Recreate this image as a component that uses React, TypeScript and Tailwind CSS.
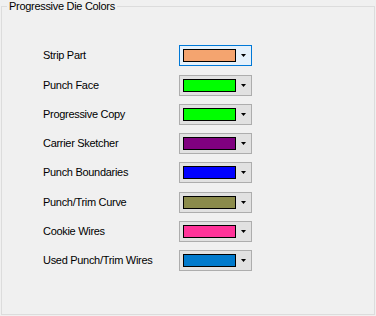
import React from "react";

type ColorRow = {
	label: string;
	color: string;
	extraTop?: boolean;
};

const rows: ColorRow[] = [
	{ label: "Strip Part", color: "#f4a46f" },
	{ label: "Punch Face", color: "#00ff00", extraTop: true },
	{ label: "Progressive Copy", color: "#00ff00" },
	{ label: "Carrier Sketcher", color: "#800080" },
	{ label: "Punch Boundaries", color: "#0000ff" },
	{ label: "Punch/Trim Curve", color: "#8b8b4b", extraTop: true },
	{ label: "Cookie Wires", color: "#ff3399" },
	{ label: "Used Punch/Trim Wires", color: "#007acc" },
];

function ColorCombo({ color, focused }: { color: string; focused?: boolean }) {
	return (
		<div
			className={`${
				focused ? "border-[#0078d7] bg-[#e5f1fb]" : "border-[#adadad] bg-[#e1e1e1]"
			} flex items-center shrink-0 w-[73px] h-[21px] border pl-[3px]`}
		>
			<div className="w-[53px] h-[13px] border border-black" style={{ backgroundColor: color }} />
			<svg className="ml-[5px]" width="5" height="3" viewBox="0 0 5 3">
				<polygon points="0,0 5,0 2.5,3" fill="#000" />
			</svg>
		</div>
	);
}

export default function App() {
	return (
		<div
			className="w-[376px] h-[316px] bg-[#f0f0f0] pl-px pb-px text-[11px] text-black tracking-[-0.3px]"
			style={{ fontFamily: '"Liberation Sans", Arial, sans-serif' }}
		>
			<fieldset className="w-[374px] h-[315px] border border-[#dcdcdc] pt-[32px]">
				<legend className="ml-[5px] px-[2px] leading-[13px]">Progressive Die Colors</legend>
				<div className="flex flex-col gap-[8px]">
					{rows.map((row, i) => (
						<div key={row.label} className={`${row.extraTop ? "mt-px" : ""} flex items-center`}>
							<span className="w-[177px] shrink-0 pl-[41px] whitespace-nowrap">{row.label}</span>
							<ColorCombo color={row.color} focused={i === 0} />
						</div>
					))}
				</div>
			</fieldset>
		</div>
	);
}
